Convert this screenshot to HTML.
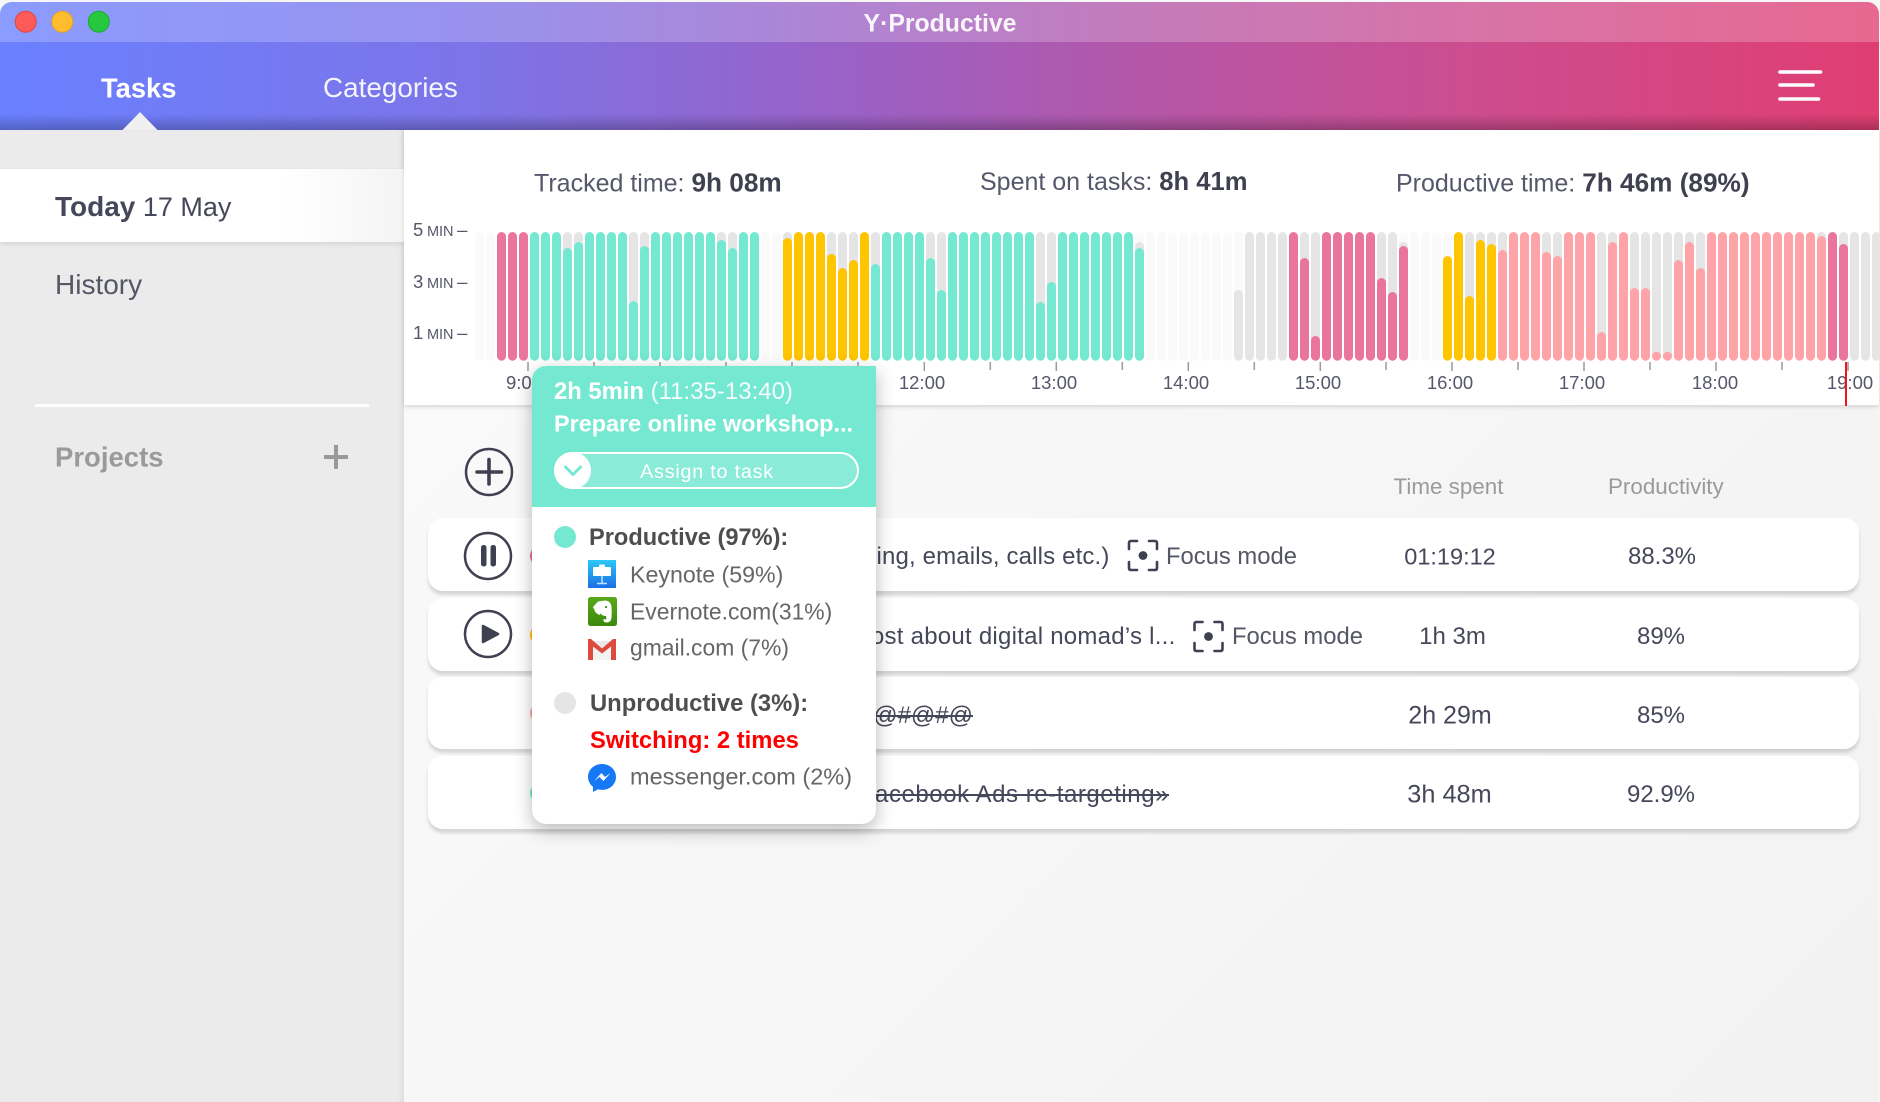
<!DOCTYPE html>
<html lang="en"><head><meta charset="utf-8"><title>Y·Productive</title>
<style>
html,body{margin:0;padding:0;width:1880px;height:1102px;overflow:hidden;background:#f6f6f6;font-family:"Liberation Sans",sans-serif;color:#3f4150}
.a{position:absolute;white-space:nowrap;line-height:1;transform:translateY(-50%)}
.c{transform:translate(-50%,-50%)}
.bx{position:absolute}
.row{position:absolute;left:428px;width:1431px;background:#fff;border-radius:15px;box-shadow:0 4px 3px rgba(0,0,0,.14)}
.t{font-size:24px;color:#45475a}
.pl{font-size:23.2px;color:#666}
svg{position:absolute;overflow:visible}
b{font-weight:bold}
.st{font-size:25px;color:#55576a;top:183px}
.st b{font-size:26.2px;color:#3f4150}
.ml{left:413px;font-size:18.5px;color:#55576a;word-spacing:-1.5px}
.ml span{font-size:14.5px}
</style></head><body>

<!-- main bg -->
<div class="bx" style="left:404px;top:130px;width:1475px;height:972px;background:linear-gradient(135deg,#fafafa,#f2f2f2)"></div>
<!-- sidebar -->
<div class="bx" style="left:0;top:130px;width:404px;height:972px;background:#ebebeb;box-shadow:inset -5px 0 6px -3px rgba(0,0,0,.07)"></div>
<div class="bx" style="left:0;top:169px;width:404px;height:73px;background:linear-gradient(90deg,#fff 70%,#f4f4f4);box-shadow:0 2px 5px rgba(0,0,0,.1)"></div>
<div class="a" style="left:55px;top:207px;font-size:27px;color:#45475a"><b style="font-size:28px">Today</b> 17 May</div>
<div class="a" style="left:55px;top:285px;font-size:28px;color:#555766">History</div>
<div class="bx" style="left:35px;top:404px;width:334px;height:3px;background:#fff"></div>
<div class="a" style="left:55px;top:457px;font-size:27.5px;font-weight:bold;color:#9a9a9a">Projects</div>
<svg style="left:0;top:0" width="1" height="1"><path d="M324 457H348M336 445V469" stroke="#999" stroke-width="4" fill="none"/></svg>

<!-- header -->
<div class="bx" style="left:0;top:2px;width:1879px;height:128px;border-radius:12px 12px 0 0;overflow:hidden;background:linear-gradient(90deg,#6a80ff 0%,#7c74e8 25%,#9a61c6 45%,#b656a6 62%,#cc4d90 78%,#e03e72 100%)">
 <div class="bx" style="left:0;top:0;width:100%;height:40px;background:rgba(255,255,255,.22)"></div>
 <div class="bx" style="left:0;bottom:0;width:100%;height:16px;background:linear-gradient(rgba(0,0,0,0),rgba(0,0,0,.24))"></div>
</div>
<svg style="left:0;top:0" width="1" height="1">
 <circle cx="25.7" cy="21.7" r="10.5" fill="#fd5a59" stroke="#e2463f"/>
 <circle cx="62.3" cy="21.7" r="10.5" fill="#febc2e" stroke="#e1a326"/>
 <circle cx="98.8" cy="21.7" r="10.5" fill="#27c840" stroke="#1fa931"/>
 <path d="M122.5 130L140 112L157.5 130Z" fill="#efefef"/>
 <path d="M1780 72H1820.5M1780 85H1813M1780 99H1818.5" stroke="#fff" stroke-width="3.6" stroke-linecap="round"/>
</svg>
<div class="a c" style="left:940px;top:25px;font-size:24.8px;font-weight:bold;color:rgba(255,255,255,.92)">Y·Productive</div>
<div class="a" style="left:101px;top:88px;font-size:27.3px;font-weight:bold;color:#fff">Tasks</div>
<div class="a" style="left:323px;top:88px;font-size:27.9px;color:rgba(255,255,255,.92)">Categories</div>

<!-- top panel -->
<div class="bx" style="left:404px;top:130px;width:1475px;height:275px;background:#fff;box-shadow:0 2px 4px rgba(0,0,0,.13)"></div>
<div class="a st" style="left:534px">Tracked time: <b>9h 08m</b></div>
<div class="a st" style="left:980px">Spent on tasks: <b style="font-size:25.6px">8h 41m</b></div>
<div class="a st" style="left:1396px">Productive time: <b>7h 46m (89%)</b></div>

<div class="a ml" style="top:230px">5 <span>MIN</span> –</div>
<div class="a ml" style="top:282px">3 <span>MIN</span> –</div>
<div class="a ml" style="top:333px">1 <span>MIN</span> –</div>

<!-- bars -->
<svg style="left:475px;top:232px" width="1405" height="129" fill="none" stroke-width="9" stroke-linecap="round">
<path stroke="#fafafa" d="M4.5 4.5V124.2M15.5 4.5V124.2M290.5 4.5V124.2M301.5 4.5V124.2M664.5 4.5V124.2M675.5 4.5V124.2M686.5 4.5V124.2M697.5 4.5V124.2M708.5 4.5V124.2M719.5 4.5V124.2M730.5 4.5V124.2M741.5 4.5V124.2M752.5 4.5V124.2M763.5 4.5V124.2M928.5 4.5V124.2M939.5 4.5V124.2M950.5 4.5V124.2M961.5 4.5V124.2M972.5 4.5V124.2"/>
<path stroke="#e5e5e5" d="M92.5 4.5V124.2M103.5 4.5V124.2M158.5 4.5V124.2M169.5 4.5V124.2M246.5 4.5V124.2M257.5 4.5V124.2M312.5 4.5V124.2M356.5 4.5V124.2M367.5 4.5V124.2M378.5 4.5V124.2M400.5 4.5V124.2M455.5 4.5V124.2M466.5 4.5V124.2M565.5 4.5V124.2M576.5 4.5V124.2M774.5 4.5V124.2M785.5 4.5V124.2M796.5 4.5V124.2M807.5 4.5V124.2M829.5 4.5V124.2M840.5 4.5V124.2M906.5 4.5V124.2M917.5 4.5V124.2M994.5 4.5V124.2M1005.5 4.5V124.2M1016.5 4.5V124.2M1027.5 4.5V124.2M1071.5 4.5V124.2M1082.5 4.5V124.2M1126.5 4.5V124.2M1137.5 4.5V124.2M1159.5 4.5V124.2M1170.5 4.5V124.2M1181.5 4.5V124.2M1192.5 4.5V124.2M1203.5 4.5V124.2M1214.5 4.5V124.2M1225.5 4.5V124.2M1346.5 4.5V124.2M1368.5 4.5V124.2M1379.5 4.5V124.2M1390.5 4.5V124.2M1401.5 4.5V124.2M664.5 14.5V124.2M928.5 14.5V124.2M763.5 62.5V124.2"/>
<path stroke="#e9749c" d="M26.5 4.5V124.2M37.5 4.5V124.2M48.5 4.5V124.2M818.5 4.5V124.2M851.5 4.5V124.2M862.5 4.5V124.2M873.5 4.5V124.2M884.5 4.5V124.2M895.5 4.5V124.2M829.5 30.5V124.2M840.5 108.5V124.2M906.5 50.5V124.2M917.5 64.5V124.2M928.5 18.5V124.2M1357.5 4.5V124.2M1368.5 16.5V124.2"/>
<path stroke="#75e8d2" d="M59.5 4.5V124.2M70.5 4.5V124.2M81.5 4.5V124.2M114.5 4.5V124.2M125.5 4.5V124.2M136.5 4.5V124.2M147.5 4.5V124.2M180.5 4.5V124.2M191.5 4.5V124.2M202.5 4.5V124.2M213.5 4.5V124.2M224.5 4.5V124.2M235.5 4.5V124.2M268.5 4.5V124.2M279.5 4.5V124.2M411.5 4.5V124.2M422.5 4.5V124.2M433.5 4.5V124.2M444.5 4.5V124.2M477.5 4.5V124.2M488.5 4.5V124.2M499.5 4.5V124.2M510.5 4.5V124.2M521.5 4.5V124.2M532.5 4.5V124.2M543.5 4.5V124.2M554.5 4.5V124.2M587.5 4.5V124.2M598.5 4.5V124.2M609.5 4.5V124.2M620.5 4.5V124.2M631.5 4.5V124.2M642.5 4.5V124.2M653.5 4.5V124.2M92.5 20.5V124.2M103.5 14.5V124.2M158.5 73.8V124.2M169.5 18.5V124.2M246.5 12.5V124.2M257.5 20.5V124.2M400.5 36.5V124.2M455.5 30.5V124.2M466.5 62.5V124.2M565.5 74.5V124.2M576.5 54.5V124.2M664.5 20.5V124.2"/>
<path stroke="#fec500" d="M312.5 10.5V124.2M323.5 4.5V124.2M334.5 4.5V124.2M345.5 4.5V124.2M356.5 26.5V124.2M367.5 40.5V124.2M378.5 32.5V124.2M389.5 4.5V124.2M972.5 28.5V124.2M983.5 4.5V124.2M994.5 68.5V124.2M1005.5 12.5V124.2M1016.5 16.5V124.2"/>
<path stroke="#fea4a8" d="M1027.5 22.5V124.2M1038.5 4.5V124.2M1049.5 4.5V124.2M1060.5 4.5V124.2M1071.5 24.5V124.2M1082.5 28.5V124.2M1093.5 4.5V124.2M1104.5 4.5V124.2M1115.5 4.5V124.2M1126.5 104.5V124.2M1137.5 14.5V124.2M1148.5 4.5V124.2M1159.5 60.5V124.2M1170.5 60.5V124.2M1181.5 124.2V124.21M1192.5 124.2V124.21M1203.5 32.5V124.2M1214.5 14.5V124.2M1225.5 40.5V124.2M1236.5 4.5V124.2M1247.5 4.5V124.2M1258.5 4.5V124.2M1269.5 4.5V124.2M1280.5 4.5V124.2M1291.5 4.5V124.2M1302.5 4.5V124.2M1313.5 4.5V124.2M1324.5 4.5V124.2M1335.5 4.5V124.2M1346.5 8.5V124.2"/>
</svg>

<!-- ticks -->
<svg style="left:0;top:0" width="1" height="1"><path stroke="#9a9a9f" stroke-width="1.5" d="M528 362V371M594 362V370M660 362V371M726 362V370M792 362V371M858 362V370M924.3 362V371M990.3 362V370M1056.3 362V371M1122.3 362V370M1188.3 362V371M1254.3 362V370M1320.3 362V371M1386 362V370M1452 362V371M1518 362V370M1584 362V371M1650 362V370M1716 362V371M1782 362V370M1848 362V371"/></svg>
<div class="a c" style="left:524px;top:383px;font-size:18.5px;color:#55576a">9:00</div>
<div class="a c" style="left:922px;top:383px;font-size:18.5px;color:#55576a">12:00</div>
<div class="a c" style="left:1054px;top:383px;font-size:18.5px;color:#55576a">13:00</div>
<div class="a c" style="left:1186px;top:383px;font-size:18.5px;color:#55576a">14:00</div>
<div class="a c" style="left:1318px;top:383px;font-size:18.5px;color:#55576a">15:00</div>
<div class="a c" style="left:1450px;top:383px;font-size:18.5px;color:#55576a">16:00</div>
<div class="a c" style="left:1582px;top:383px;font-size:18.5px;color:#55576a">17:00</div>
<div class="a c" style="left:1715px;top:383px;font-size:18.5px;color:#55576a">18:00</div>
<div class="a c" style="left:1850px;top:383px;font-size:18.5px;color:#55576a">19:00</div>
<div class="bx" style="left:1845px;top:362px;width:2px;height:44px;background:#f5101a"></div>

<!-- rows -->
<div class="row" style="top:518px;height:73px"></div>
<div class="row" style="top:598px;height:73px"></div>
<div class="row" style="top:677px;height:72px"></div>
<div class="row" style="top:756px;height:73px"></div>

<div class="a" style="left:1393.5px;top:487px;font-size:22.4px;color:#9a9a9a">Time spent</div>
<div class="a" style="left:1608px;top:487px;font-size:22.4px;color:#9a9a9a">Productivity</div>

<svg style="left:0;top:0" width="1" height="1" fill="none" stroke="#3f4150">
 <circle cx="489" cy="472" r="23" stroke-width="2.5"/>
 <path d="M477 472H501.5M489 459.5V484" stroke-width="3.6" stroke-linecap="round"/>
 <circle cx="488" cy="556" r="23" stroke-width="2.5"/>
 <rect x="481" y="545" width="5.5" height="21.5" rx="2.5" fill="#3f4150" stroke="none"/>
 <rect x="490.5" y="545" width="5.5" height="21.5" rx="2.5" fill="#3f4150" stroke="none"/>
 <circle cx="488" cy="634" r="23" stroke-width="2.5"/>
 <path d="M483 626V642L498 634Z" fill="#3f4150" stroke-width="2.5" stroke-linejoin="round"/>
 <circle cx="540" cy="556" r="10" fill="#e9749c" stroke="none"/>
 <circle cx="540" cy="635" r="10" fill="#fec500" stroke="none"/>
 <circle cx="540" cy="713" r="10" fill="#fea4a8" stroke="none"/>
 <circle cx="540" cy="793" r="10" fill="#75e8d2" stroke="none"/>
 <!-- focus icons -->
 <g stroke-width="2.6" stroke-linecap="round">
  <path d="M1129 549V543Q1129 541 1131 541H1137M1149 541H1155Q1157 541 1157 543V549M1157 562V568Q1157 570 1155 570H1149M1137 570H1131Q1129 570 1129 568V562"/>
  <circle cx="1143" cy="555.5" r="4.4" fill="#3f4150" stroke="none"/>
  <path d="M1194.5 630V624Q1194.5 622 1196.5 622H1202.5M1214.5 622H1220.5Q1222.5 622 1222.5 624V630M1222.5 643V649Q1222.5 651 1220.5 651H1214.5M1202.5 651H1196.5Q1194.5 651 1194.5 649V643"/>
  <circle cx="1208.5" cy="636.5" r="4.4" fill="#3f4150" stroke="none"/>
 </g>
</svg>
<div class="a t" style="right:770.5px;top:557px;letter-spacing:.15px">Calling, emails, calls etc.)</div>
<div class="a t" style="left:1166px;top:557px;font-size:23.8px;color:#555766">Focus mode</div>
<div class="a t" style="right:704.5px;top:637px;letter-spacing:.25px">Write a post about digital nomad’s l...</div>
<div class="a t" style="left:1232px;top:637px;font-size:23.8px;color:#555766">Focus mode</div>
<div class="a t" style="right:907px;top:715.5px;font-size:24px;text-decoration:line-through">#@#@#@#@</div>
<div class="a t" style="right:711px;top:795px;letter-spacing:.55px;text-decoration:line-through">«Facebook Ads re-targeting»</div>

<div class="a c t" style="left:1450px;top:557px;font-size:23.5px">01:19:12</div>
<div class="a c t" style="left:1452.5px;top:637px">1h 3m</div>
<div class="a c t" style="left:1450px;top:716px;font-size:25px">2h 29m</div>
<div class="a c t" style="left:1449.5px;top:795px;font-size:25.3px">3h 48m</div>
<div class="a c t" style="left:1662px;top:557px">88.3%</div>
<div class="a c t" style="left:1661px;top:637px">89%</div>
<div class="a c t" style="left:1661px;top:716px">85%</div>
<div class="a c t" style="left:1661px;top:795px">92.9%</div>

<!-- popover -->
<div class="bx" style="left:532px;top:366px;width:344px;height:458px;background:#fff;border-radius:14px 0 14px 14px;box-shadow:0 6px 18px rgba(0,0,0,.28)"></div>
<div class="bx" style="left:532px;top:366px;width:344px;height:141px;background:#75e8d2;border-radius:14px 0 0 0"></div>
<div class="a" style="left:554px;top:392px;font-size:24px;color:#fff"><b style="font-size:23.8px">2h 5min</b> <span style="opacity:.92">(11:35-13:40)</span></div>
<div class="a" style="left:554px;top:424px;font-size:23.4px;font-weight:bold;color:#fff">Prepare online workshop...</div>
<div class="bx" style="left:554px;top:452px;width:301px;height:33px;border:2px solid #fff;border-radius:20px;background:rgba(255,255,255,.16)"></div>
<div class="bx" style="left:554px;top:452px;width:37px;height:37px;border-radius:50%;background:#fff"></div>
<svg style="left:0;top:0" width="1" height="1"><path d="M565.5 467L573 474.5L580.5 467" fill="none" stroke="#75e8d2" stroke-width="3" stroke-linecap="round" stroke-linejoin="round"/></svg>
<div class="a c" style="left:707px;top:473px;font-size:19.7px;letter-spacing:.8px;color:#fff">Assign to task</div>

<svg style="left:0;top:0" width="1" height="1">
 <circle cx="565" cy="537" r="11" fill="#75e8d2"/>
 <circle cx="565" cy="703" r="11" fill="#e5e5e5"/>
 <defs>
  <linearGradient id="kn" x1="0" y1="0" x2="0" y2="1"><stop offset="0" stop-color="#2cc8f6"/><stop offset="1" stop-color="#1c6de6"/></linearGradient>
  <linearGradient id="en" x1="0" y1="0" x2="0" y2="1"><stop offset="0" stop-color="#5aa81a"/><stop offset="1" stop-color="#3b8a0c"/></linearGradient>
 </defs>
 <!-- keynote -->
 <rect x="588" y="560" width="28" height="28" fill="url(#kn)"/>
 <rect x="593" y="567" width="18" height="9" rx="1" fill="#fff"/>
 <rect x="599" y="564.5" width="6" height="2.5" rx="1" fill="#fff"/>
 <path d="M602 576V583.5M597 583.5H607" stroke="#bfe4ff" stroke-width="1.5"/>
 <!-- evernote -->
 <rect x="588" y="597" width="29" height="29" rx="2.5" fill="url(#en)"/>
 <path d="M593 607L598 601.5L605 600.5Q611 601 611.5 607Q612 613 611.5 618Q611 622.5 606.5 622.5Q603 622.5 603.5 619L606.5 619.5L606 616Q602 616 601 613.5L599.5 615Q595 613 594.5 610Z" fill="#fff"/>
 <circle cx="606" cy="607" r="1.1" fill="#3f8f10"/>
 <!-- gmail -->
 <path d="M588 641H616V660H588Z" fill="#e9e9e9"/>
 <path d="M593 660V646L602 654L611 646V660Z" fill="#f3f3f3"/>
 <path d="M588 660V639L591 639L602 648.5L613 639H616V660H611V646.5L602 653.5L593 646.5V660Z" fill="#dd4b3e"/>
 <!-- messenger -->
 <path d="M602 764C594 764 588 769.8 588 777C588 781 590 784.5 593 786.8V792L598 789.3C599.2 789.7 600.6 789.9 602 789.9C610 789.9 616 784.2 616 777C616 769.8 610 764 602 764Z" fill="#1678f5"/>
 <path d="M594 781L601.5 773L605 777L610.5 773L603.5 781L599.5 777Z" fill="#fff"/>
</svg>
<div class="a" style="left:589px;top:539px;font-size:23.6px;font-weight:bold;color:#4e4e4e">Productive (97%):</div>
<div class="a pl" style="left:630px;top:575px">Keynote (59%)</div>
<div class="a pl" style="left:630px;top:612px;font-size:22.9px">Evernote.com(31%)</div>
<div class="a pl" style="left:630px;top:648px;font-size:22.9px">gmail.com (7%)</div>
<div class="a" style="left:590px;top:704px;font-size:23.8px;font-weight:bold;color:#4e4e4e">Unproductive (3%):</div>
<div class="a" style="left:590px;top:741px;font-size:23.8px;font-weight:bold;color:#fe0000">Switching: 2 times</div>
<div class="a pl" style="left:630px;top:777px;font-size:23.5px">messenger.com (2%)</div>

</body></html>
